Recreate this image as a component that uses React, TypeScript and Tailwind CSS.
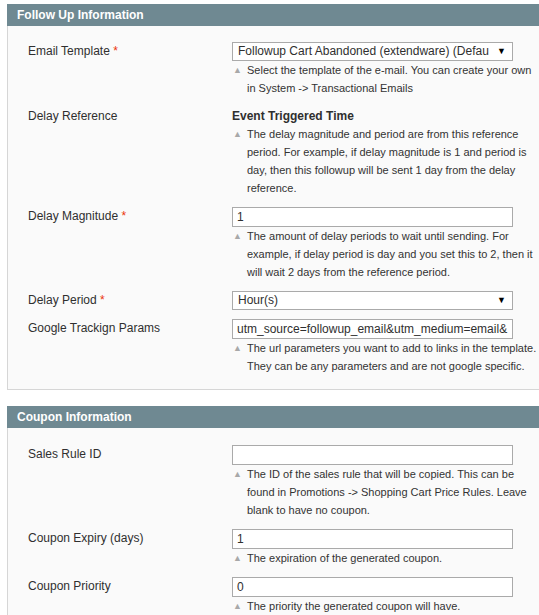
import type { ReactNode } from 'react'

const font = { fontFamily: '"Liberation Sans", Arial, sans-serif' }

function Req() {
  return <span className="text-[#eb340a]"> *</span>
}

function Note({ children }: { children: ReactNode }) {
  return (
    <div className="flex text-[11px] leading-[18px] text-[#333]">
      <span className="w-[15px] shrink-0 pl-[1px] text-[9px] text-[#a8a8a8]">▲</span>
      <div className="w-[292px]">{children}</div>
    </div>
  )
}

function TextInput({ value }: { value: string }) {
  return (
    <div className="h-[20px] w-[281px] overflow-hidden whitespace-nowrap border border-[#aaa] bg-white px-[4px] text-[12px] leading-[18px] text-[#2f2f2f]">
      {value}
    </div>
  )
}

function Select({ value }: { value: string }) {
  return (
    <div className="flex h-[19px] w-[281px] items-center border border-[#aaa] bg-white pl-[5px] pr-[6px] text-[12px] leading-[17px] text-[#2f2f2f]">
      <span className="flex-1 overflow-hidden whitespace-nowrap">{value}</span>
      <span className="pl-[3px] text-[9px] text-black">▼</span>
    </div>
  )
}

function Row({ label, children, last }: { label: ReactNode; children: ReactNode; last?: boolean }) {
  return (
    <div className={`flex ${last ? '' : 'mb-[10px]'}`}>
      <div className="w-[204px] shrink-0 text-[12px] leading-[18px] text-[#2f2f2f]">{label}</div>
      <div>{children}</div>
    </div>
  )
}

function Section({ title, children, className }: { title: string; children: ReactNode; className?: string }) {
  return (
    <section className={className}>
      <div className="h-[22px] bg-[#6f8992] pl-[10px] text-[12px] font-bold leading-[22px] text-white">{title}</div>
      <div className="border border-t-0 border-[#d6d6d6] bg-[#fafafa] pl-[20px]">{children}</div>
    </section>
  )
}

export default function App() {
  return (
    <div className="h-[615px] w-[539px] overflow-hidden bg-white" style={font}>
      <div className="w-[560px] pl-[7px] pt-[4px]">
        <Section title="Follow Up Information">
          <div className="pb-[14px] pt-[16px]">
            <Row
              label={
                <>
                  Email Template<Req />
                </>
              }
            >
              <Select value="Followup Cart Abandoned (extendware) (Defau" />
              <Note>Select the template of the e-mail. You can create your own in System -&gt; Transactional Emails</Note>
            </Row>
            <Row label="Delay Reference">
              <div className="text-[12px] font-bold leading-[18px] text-[#2f2f2f]">Event Triggered Time</div>
              <Note>
                The delay magnitude and period are from this reference period. For example, if delay magnitude is 1
                and period is day, then this followup will be sent 1 day from the delay reference.
              </Note>
            </Row>
            <Row
              label={
                <>
                  Delay Magnitude<Req />
                </>
              }
            >
              <TextInput value="1" />
              <Note>
                The amount of delay periods to wait until sending. For example, if delay period is day and you set
                this to 2, then it will wait 2 days from the reference period.
              </Note>
            </Row>
            <div className="mb-[9px] flex">
              <div className="w-[204px] shrink-0 text-[12px] leading-[18px] text-[#2f2f2f]">
                Delay Period<Req />
              </div>
              <Select value="Hour(s)" />
            </div>
            <Row label="Google Trackign Params" last>
              <TextInput value="utm_source=followup_email&utm_medium=email&" />
              <Note>
                The url parameters you want to add to links in the template. They can be any parameters and are not
                google specific.
              </Note>
            </Row>
          </div>
        </Section>

        <Section title="Coupon Information" className="mt-[16px]">
          <div className="pb-[20px] pt-[17px]">
            <Row label="Sales Rule ID">
              <TextInput value="" />
              <Note>
                The ID of the sales rule that will be copied. This can be found in Promotions -&gt; Shopping Cart
                Price Rules. Leave blank to have no coupon.
              </Note>
            </Row>
            <Row label="Coupon Expiry (days)">
              <TextInput value="1" />
              <Note>The expiration of the generated coupon.</Note>
            </Row>
            <Row label="Coupon Priority" last>
              <TextInput value="0" />
              <Note>The priority the generated coupon will have.</Note>
            </Row>
          </div>
        </Section>
      </div>
    </div>
  )
}
